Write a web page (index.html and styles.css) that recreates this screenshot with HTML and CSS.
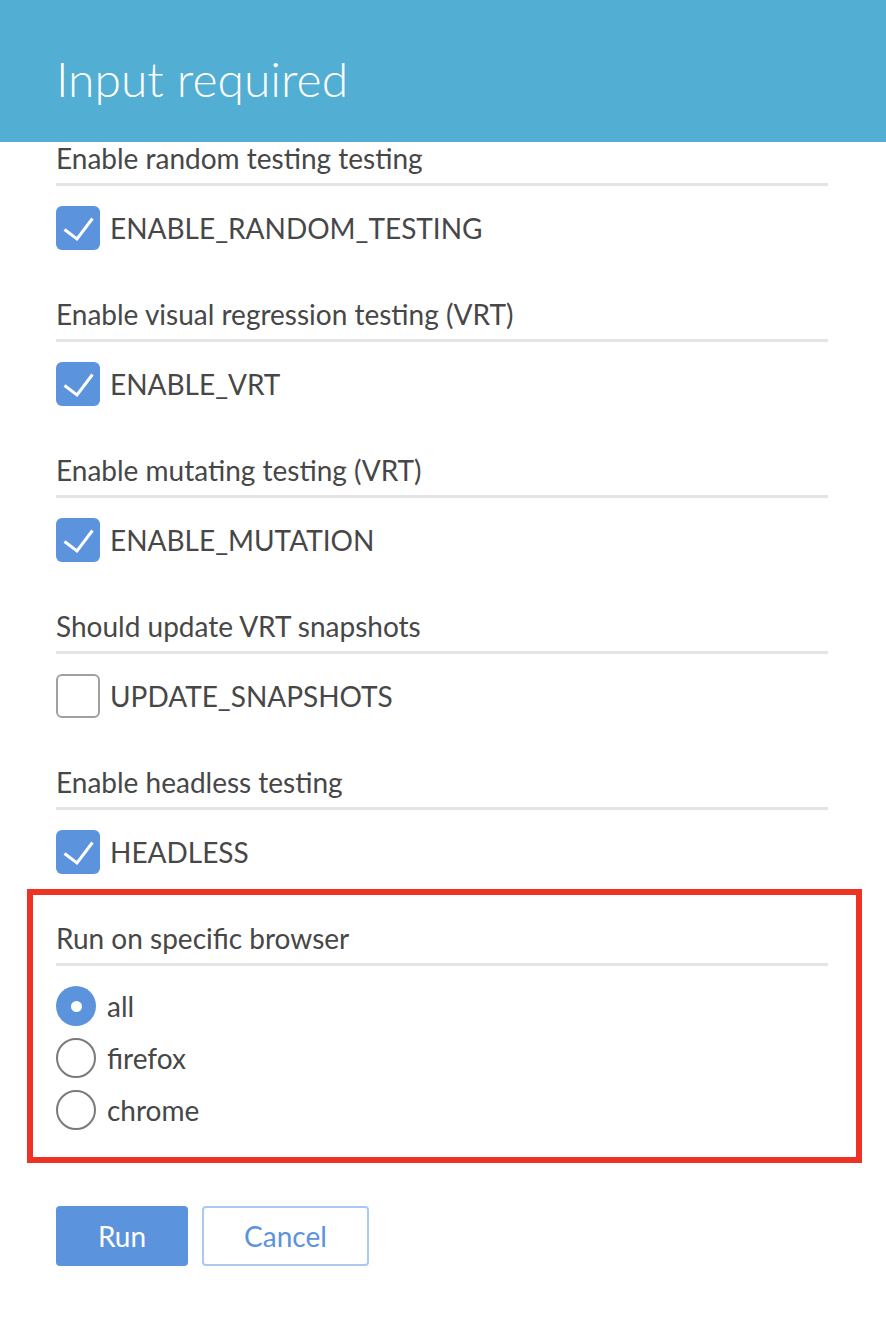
FILE: index.html
```html
<!DOCTYPE html>
<html>
<head>
<meta charset="utf-8">
<link rel="stylesheet" href="styles.css">
</head>
<body>
<div class="dialog">
  <header class="dialog-header">
    <h1 class="dialog-title">Input required</h1>
  </header>
  <form class="dialog-body">
    <section class="field">
      <div class="field-label">Enable random testing testing</div>
      <label class="check-row">
        <span class="checkbox checked"><svg viewBox="0 0 44 44"><path d="M8.5 23.5 L21 33 L36.5 12.5"/></svg></span>
        <span class="check-text">ENABLE_RANDOM_TESTING</span>
      </label>
    </section>
    <section class="field">
      <div class="field-label">Enable visual regression testing (VRT)</div>
      <label class="check-row">
        <span class="checkbox checked"><svg viewBox="0 0 44 44"><path d="M8.5 23.5 L21 33 L36.5 12.5"/></svg></span>
        <span class="check-text">ENABLE_VRT</span>
      </label>
    </section>
    <section class="field">
      <div class="field-label">Enable mutating testing (VRT)</div>
      <label class="check-row">
        <span class="checkbox checked"><svg viewBox="0 0 44 44"><path d="M8.5 23.5 L21 33 L36.5 12.5"/></svg></span>
        <span class="check-text">ENABLE_MUTATION</span>
      </label>
    </section>
    <section class="field">
      <div class="field-label">Should update VRT snapshots</div>
      <label class="check-row">
        <span class="checkbox"></span>
        <span class="check-text">UPDATE_SNAPSHOTS</span>
      </label>
    </section>
    <section class="field">
      <div class="field-label">Enable headless testing</div>
      <label class="check-row">
        <span class="checkbox checked"><svg viewBox="0 0 44 44"><path d="M8.5 23.5 L21 33 L36.5 12.5"/></svg></span>
        <span class="check-text">HEADLESS</span>
      </label>
    </section>
    <section class="field field-highlight">
      <div class="field-label">Run on specific browser</div>
      <div class="radio-list">
        <label class="radio-row"><span class="radio checked"></span><span class="radio-text">all</span></label>
        <label class="radio-row"><span class="radio"></span><span class="radio-text">firefox</span></label>
        <label class="radio-row"><span class="radio"></span><span class="radio-text">chrome</span></label>
      </div>
    </section>
    <div class="actions">
      <button type="button" class="btn btn-primary">Run</button>
      <button type="button" class="btn btn-secondary">Cancel</button>
    </div>
  </form>
</div>
</body>
</html>
```
FILE: styles.css
```css
html, body {
  margin: 0;
  padding: 0;
  background: #ffffff;
}
body {
  font-family: Lato, "Open Sans", sans-serif;
  color: #474747;
}
.dialog-header {
  height: 142px;
  background: #52aed3;
  box-sizing: border-box;
  padding: 50px 0 0 56px;
}
.dialog-title {
  margin: 0;
  font-size: 48px;
  line-height: 58px;
  font-weight: 300;
  color: #ffffff;
}
.dialog-body {
  width: 772px;
  padding: 0 0 0 56px;
  margin: 0;
}
.field {
  margin-top: 48px;
}
.field:first-child {
  margin-top: 0;
}
.field-label {
  font-size: 28px;
  line-height: 32px;
  padding-bottom: 9px;
  border-bottom: 3px solid #e4e4e4;
  margin-bottom: 20px;
}
.check-row {
  display: flex;
  align-items: center;
  gap: 10px;
  height: 44px;
}
.checkbox {
  width: 44px;
  height: 44px;
  box-sizing: border-box;
  border: 2px solid #a0a0a0;
  border-radius: 6px;
  flex: none;
  display: flex;
}
.checkbox.checked {
  background: #5b93dd;
  border: none;
}
.checkbox svg {
  width: 44px;
  height: 44px;
}
.checkbox svg path {
  fill: none;
  stroke: #ffffff;
  stroke-width: 3;
}
.check-text {
  font-size: 28px;
}
.field-highlight {
  margin: 15px -34px 0 -29px;
  border: 6px solid #ee3324;
  padding: 27px 28px 27px 23px;
}
.radio-list {
  display: flex;
  flex-direction: column;
  gap: 12px;
}
.radio-row {
  display: flex;
  align-items: center;
  gap: 11px;
  height: 40px;
}
.radio {
  width: 40px;
  height: 40px;
  box-sizing: border-box;
  border: 2px solid #7a7a7a;
  border-radius: 50%;
  flex: none;
  display: flex;
  align-items: center;
  justify-content: center;
}
.radio.checked {
  background: #5b93dd;
  border: none;
}
.radio.checked::after {
  content: "";
  width: 11px;
  height: 11px;
  border-radius: 50%;
  background: #ffffff;
}
.radio-text {
  font-size: 28px;
}
.actions {
  display: flex;
  gap: 14px;
  margin-top: 43px;
}
.btn {
  height: 60px;
  font-family: Lato, "Open Sans", sans-serif;
  font-size: 28px;
  border-radius: 4px;
  box-sizing: border-box;
  cursor: pointer;
}
.btn-primary {
  width: 132px;
  background: #5b93dd;
  color: #ffffff;
  border: none;
}
.btn-secondary {
  width: 167px;
  background: #ffffff;
  color: #5b93dd;
  border: 2px solid #a9c9f0;
}
```
